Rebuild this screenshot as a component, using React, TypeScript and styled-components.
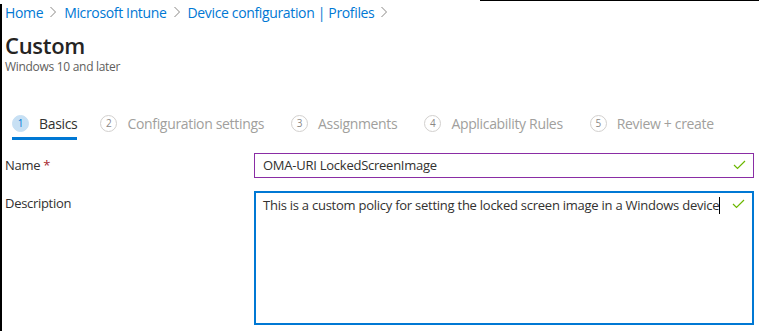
import React from 'react';
import styled, { createGlobalStyle } from 'styled-components';

const font = '"Segoe UI", "Open Sans", "Noto Sans", sans-serif';

const GlobalStyle = createGlobalStyle`
  html, body {
    margin: 0;
    padding: 0;
    background: #fff;
  }
  body {
    font-family: ${font};
    color: #323130;
  }
`;

const Frame = styled.div`
  position: relative;
  width: 759px;
  height: 331px;
  overflow: hidden;
  box-sizing: border-box;
  padding: 2px 0 0 5px;

  &::before {
    content: '';
    position: absolute;
    left: 0;
    top: 4px;
    bottom: 0;
    width: 1.5px;
    background: #000;
  }
  &::after {
    content: '';
    position: absolute;
    left: 480px;
    right: 0;
    top: 0;
    height: 1px;
    background: #000;
  }
`;

const Breadcrumb = styled.nav`
  display: flex;
  align-items: center;
  height: 20px;
  font-size: 14px;
  letter-spacing: -0.35px;
`;

const Crumb = styled.a`
  color: #0078d4;
  text-decoration: none;
`;

const Chevron = styled.svg`
  width: 8px;
  height: 12px;
  margin: 0 7px 0 6px;
`;

const Title = styled.h1`
  margin: 9px 0 0;
  font-size: 22px;
  font-weight: 600;
  line-height: 28px;
  letter-spacing: -0.3px;
  color: #252423;
`;

const Subtitle = styled.div`
  font-size: 12px;
  line-height: 16px;
  color: #605e5c;
  letter-spacing: -0.3px;
`;

const Steps = styled.div`
  display: flex;
  align-items: flex-start;
  margin: 36px 0 0 7px;
`;

const Step = styled.div<{ $active?: boolean }>`
  display: flex;
  align-items: center;
  gap: 10px;
  height: 29px;
  padding-bottom: 2px;
  box-sizing: border-box;
  margin-right: 27px;
  border-bottom: 3px solid ${(p) => (p.$active ? '#0078d4' : 'transparent')};
  font-size: 14px;
  letter-spacing: -0.33px;
  color: ${(p) => (p.$active ? '#323130' : '#a19f9d')};

  &:first-child {
    margin-right: 23px;
  }
`;

const StepNum = styled.span<{ $active?: boolean }>`
  width: 17px;
  height: 17px;
  border-radius: 50%;
  box-sizing: border-box;
  display: flex;
  align-items: center;
  justify-content: center;
  font-size: 10px;
  letter-spacing: 0;
  background: ${(p) => (p.$active ? '#c7e0f4' : '#fff')};
  border: 1px solid ${(p) => (p.$active ? '#c7e0f4' : '#d2d0ce')};
  color: ${(p) => (p.$active ? '#0078d4' : '#8a8886')};
`;

const Form = styled.div`
  display: flex;
  flex-direction: column;
  gap: 13px;
  margin-top: 13px;
`;

const Row = styled.div`
  display: grid;
  grid-template-columns: 249px 500px;
  align-items: start;
`;

const Label = styled.label`
  font-size: 13px;
  line-height: 24px;
  letter-spacing: -0.3px;
  color: #323130;
`;

const Required = styled.span`
  color: #a4262c;
  margin-left: 3px;
`;

const Field = styled.div<{ $focused?: boolean; $height: number }>`
  position: relative;
  box-sizing: border-box;
  height: ${(p) => p.$height}px;
  border: ${(p) => (p.$focused ? '2px solid #0078d4' : '1px solid #8a2da5')};
  padding: ${(p) => (p.$focused ? '1px 30px 0 7px' : '0 30px 0 8px')};
  font-size: 13px;
  line-height: 22px;
  letter-spacing: -0.25px;
  color: #323130;
`;

const Caret = styled.span`
  display: inline-block;
  width: 1px;
  height: 17px;
  background: #000;
  vertical-align: -4px;
`;

const Check = styled.svg`
  position: absolute;
  right: 7px;
  top: 6px;
  width: 13px;
  height: 10px;
`;

function ChevronIcon() {
  return (
    <Chevron viewBox="0 0 8 12">
      <path d="M1.5 1 L6.5 6 L1.5 11" fill="none" stroke="#8a8886" strokeWidth="1" />
    </Chevron>
  );
}

function CheckIcon() {
  return (
    <Check viewBox="0 0 13 10">
      <path d="M1 5 L4.5 8.5 L12 1" fill="none" stroke="#6bb700" strokeWidth="1.2" />
    </Check>
  );
}

const steps = [
  'Basics',
  'Configuration settings',
  'Assignments',
  'Applicability Rules',
  'Review + create',
];

export default function App() {
  return (
    <>
      <GlobalStyle />
      <Frame>
        <Breadcrumb>
          <Crumb>Home</Crumb>
          <ChevronIcon />
          <Crumb>Microsoft Intune</Crumb>
          <ChevronIcon />
          <Crumb>Device configuration | Profiles</Crumb>
          <ChevronIcon />
        </Breadcrumb>
        <Title>Custom</Title>
        <Subtitle>Windows 10 and later</Subtitle>
        <Steps>
          {steps.map((s, i) => (
            <Step key={s} $active={i === 0}>
              <StepNum $active={i === 0}>{i + 1}</StepNum>
              {s}
            </Step>
          ))}
        </Steps>
        <Form>
          <Row>
            <Label>
              Name<Required>*</Required>
            </Label>
            <Field $height={25}>
              OMA-URI LockedScreenImage
              <CheckIcon />
            </Field>
          </Row>
          <Row>
            <Label>Description</Label>
            <Field $focused $height={134}>
              This is a custom policy for setting the locked screen image in a Windows device
              <Caret />
              <CheckIcon />
            </Field>
          </Row>
        </Form>
      </Frame>
    </>
  );
}
